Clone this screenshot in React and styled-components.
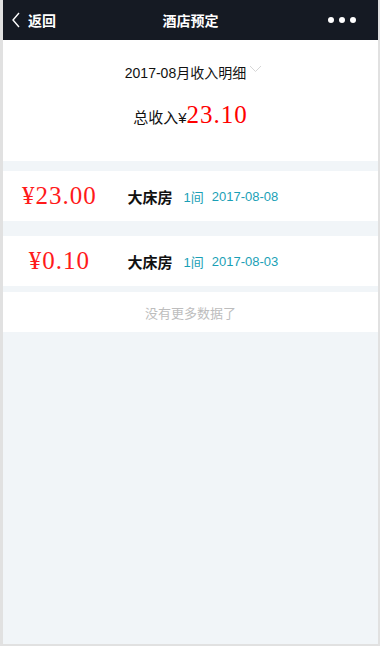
import React from 'react';
import styled, { createGlobalStyle } from 'styled-components';

const GlobalStyle = createGlobalStyle`
    html, body {
        margin: 0;
        padding: 0;
        background: #e1e1e1;
    }
    body {
        font-family: 'Liberation Sans', 'Noto Sans CJK SC', sans-serif;
    }
`

const Frame = styled.div`
    width: 375px;
    height: 644px;
    margin-left: 3px;
    background: #f1f5f8;
    display: flex;
    flex-flow: column nowrap;
    overflow: hidden;
`

const TopBar = styled.div`
    height: 40px;
    background: #151a23;
    color: #ffffff;
    display: flex;
    align-items: center;
    justify-content: space-between;
    padding: 0 22px 0 8px;
    position: relative;
`

const Back = styled.div`
    display: flex;
    align-items: center;
    gap: 7px;
    font-size: 14px;
    font-weight: bold;
`

const Title = styled.div`
    position: absolute;
    left: 0;
    right: 0;
    text-align: center;
    font-size: 14px;
    font-weight: bold;
    pointer-events: none;
`

const Dots = styled.div`
    display: flex;
    gap: 5px;

    span {
        width: 6px;
        height: 6px;
        border-radius: 50%;
        background: #ffffff;
    }
`

const Summary = styled.div`
    background: #ffffff;
    height: 121px;
    display: flex;
    flex-flow: column nowrap;
    align-items: center;
    margin-bottom: 10px;
`

const Month = styled.div`
    margin-top: 22px;
    margin-left: 6px;
    font-size: 14px;
    color: #111;
    display: flex;
    align-items: center;
    gap: 3px;

    svg {
        margin-top: -6px;
    }
`

const Total = styled.div`
    margin-top: 19px;
    font-size: 15px;
    color: #111;
    display: flex;
    align-items: baseline;
`

const TotalNum = styled.span`
    font-family: 'Liberation Serif', serif;
    font-size: 25px;
    color: #ff0000;
    letter-spacing: 1px;
`

const Row = styled.div`
    background: #ffffff;
    height: 50px;
    display: flex;
    align-items: center;
    margin-bottom: ${props => props.gap}px;
`

const Price = styled.div`
    width: 30%;
    text-align: center;
    font-family: 'Liberation Serif', serif;
    font-size: 25px;
    color: #ff1a1a;
    letter-spacing: 1px;
`

const Room = styled.div`
    margin-left: 12px;
    font-size: 15px;
    font-weight: bold;
    color: #111;
`

const Count = styled.div`
    margin-left: 11px;
    font-size: 13px;
    color: #1a9fb6;
`

const Date = styled.div`
    margin-left: 8px;
    font-size: 13px;
    color: #1a9fb6;
`

const NoMore = styled.div`
    background: #ffffff;
    height: 40px;
    display: flex;
    align-items: center;
    justify-content: center;
    font-size: 13px;
    color: #bdbdbd;
`

const records = [
    { price: '¥23.00', room: '大床房', count: '1间', date: '2017-08-08', gap: 15 },
    { price: '¥0.10', room: '大床房', count: '1间', date: '2017-08-03', gap: 6 },
]

export default function App() {
    return (
        <>
            <GlobalStyle />
            <Frame>
                <TopBar>
                    <Back>
                        <svg width="10" height="16" viewBox="0 0 10 16">
                            <path d="M8 1 L2 8 L8 15" fill="none" stroke="#ffffff" strokeWidth="1.4" />
                        </svg>
                        返回
                    </Back>
                    <Title>酒店预定</Title>
                    <Dots><span /><span /><span /></Dots>
                </TopBar>
                <Summary>
                    <Month>
                        2017-08月收入明细
                        <svg width="13" height="8" viewBox="0 0 13 8">
                            <path d="M1 1 L6.5 6.5 L12 1" fill="none" stroke="#d6d6d6" strokeWidth="1" />
                        </svg>
                    </Month>
                    <Total>
                        总收入¥<TotalNum>23.10</TotalNum>
                    </Total>
                </Summary>
                {records.map((r, i) => (
                    <Row key={i} gap={r.gap}>
                        <Price>{r.price}</Price>
                        <Room>{r.room}</Room>
                        <Count>{r.count}</Count>
                        <Date>{r.date}</Date>
                    </Row>
                ))}
                <NoMore>没有更多数据了</NoMore>
            </Frame>
        </>
    )
}
